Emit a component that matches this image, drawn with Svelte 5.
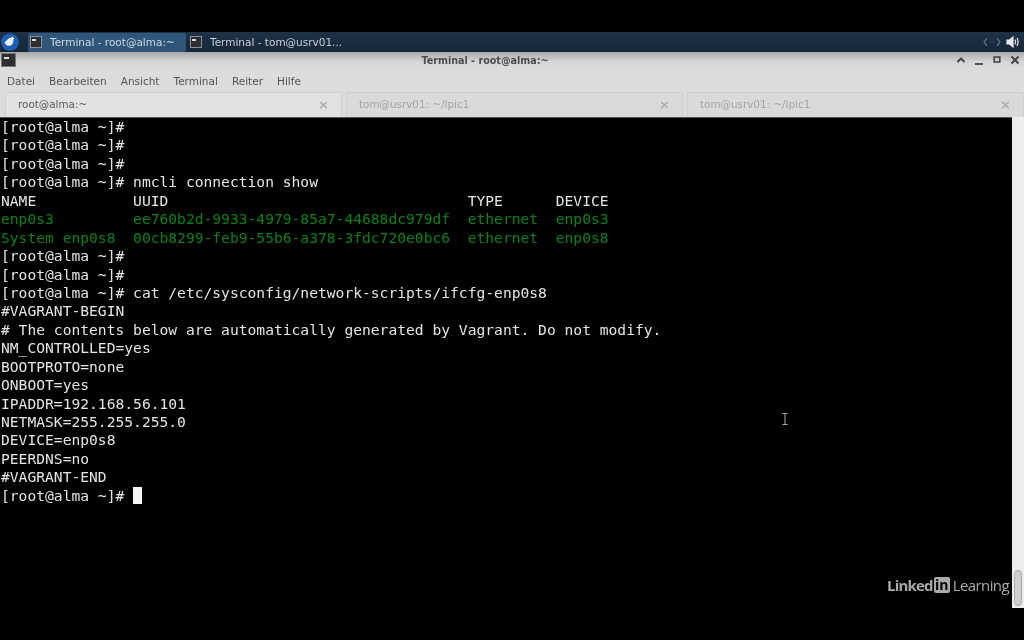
<script>
  const P = '[root@alma ~]#';
  const lines = [
    [P], [P], [P], [P + ' nmcli connection show'],
    ['NAME           UUID                                  TYPE      DEVICE'],
    ['enp0s3         ee760b2d-9933-4979-85a7-44688dc979df  ethernet  enp0s3', 'g'],
    ['System enp0s8  00cb8299-feb9-55b6-a378-3fdc720e0bc6  ethernet  enp0s8', 'g'],
    [P], [P], [P + ' cat /etc/sysconfig/network-scripts/ifcfg-enp0s8'],
    ['#VAGRANT-BEGIN'],
    ['# The contents below are automatically generated by Vagrant. Do not modify.'],
    ['NM_CONTROLLED=yes'], ['BOOTPROTO=none'], ['ONBOOT=yes'], ['IPADDR=192.168.56.101'],
    ['NETMASK=255.255.255.0'], ['DEVICE=enp0s8'], ['PEERDNS=no'], ['#VAGRANT-END']
  ];
  const menus = ['Datei', 'Bearbeiten', 'Ansicht', 'Terminal', 'Reiter', 'Hilfe'];
  const tabs = ['root@alma:~', 'tom@usrv01: ~/lpic1', 'tom@usrv01: ~/lpic1'];
</script>

<div class="screen">
  <div class="letterbox"></div>
  <div class="panel">
    <div class="logo">
      <svg width="18" height="18" viewBox="0 0 16 16">
        <circle cx="8" cy="8" r="7.8" fill="#1c5fb4" />
        <path d="M3.200 8.200c1-.5 1.600-1.500 2.600-2.500 1-1 2.400-1.500 3.500-1.700l.8-1.200.6 1.300 1.300.7-1 1c.1 2.200-.4 4.600-2.500 5.400-2.100.8-4.600-.5-5.300-3z" fill="#eef2f8" />
      </svg>
    </div>
    <div class="task active">
      <span class="ticon"><i></i></span><span>Terminal - root@alma:~</span>
    </div>
    <div class="task">
      <span class="ticon"><i></i></span><span>Terminal - tom@usrv01...</span>
    </div>
    <div class="tray">
      <svg width="18" height="12" viewBox="0 0 18 12" fill="none" stroke="#6c7a88" stroke-width="1.200">
        <path d="M4 2L1 6l3 4M14 2l3 4-3 4M7 6h1M10 6h1" />
      </svg>
      <svg width="14" height="14" viewBox="0 0 14 14" fill="none" stroke="#e6e8ea" stroke-width="1.200">
        <path d="M1 5h2.500L7 2v10L3.500 9H1z" fill="#e6e8ea" />
        <path d="M9 4.500c.8 1.500.8 3.500 0 5M11 3c1.300 2.500 1.300 5.500 0 8" />
      </svg>
    </div>
  </div>

  <div class="window">
    <div class="titlebar">
      <span class="wicon"><i></i></span>
      <span class="title">Terminal - root@alma:~</span>
      <div class="controls">
        <svg width="10" height="10" viewBox="0 0 10 10"><path d="M1.500 7l3.500-3.500L8.500 7" fill="none" stroke="#444" stroke-width="2" /></svg>
        <svg width="10" height="10" viewBox="0 0 10 10"><path d="M1 9h8" fill="none" stroke="#444" stroke-width="1.800" /></svg>
        <svg width="10" height="10" viewBox="0 0 10 10"><rect x="2.200" y="2" width="5.600" height="5" fill="none" stroke="#444" stroke-width="1.600" /></svg>
        <svg width="10" height="10" viewBox="0 0 10 10"><path d="M1.500 1.500l7 7M8.500 1.500l-7 7" fill="none" stroke="#444" stroke-width="2" /></svg>
      </div>
    </div>
    <div class="menubar">
      {#each menus as m}<span>{m}</span>{/each}
    </div>
    <div class="tabs">
      {#each tabs as t, i}
        <div class="tab" class:current={i === 0}>
          <span>{t}</span><span class="x">×</span>
        </div>
      {/each}
    </div>
    <div class="body">
      <div class="term">
        {#each lines as l}
          <div class="ln" class:green={l[1] === 'g'}>{l[0]}</div>
        {/each}
        <div class="ln">{P} <span class="cursor"></span></div>
        <div class="brand">
          <span class="linked">Linked</span><span class="in">in</span><span class="learn">Learning</span>
        </div>
        <div class="cursor-i">
          <svg width="6" height="12" viewBox="0 0 6 12"><path d="M0.500 .5h5M3 .5v11M.5 11.500h5" fill="none" stroke="#aaa" /></svg>
        </div>
      </div>
      <div class="scroll"><div class="thumb"></div></div>
    </div>
  </div>
  <div class="letterbox bottom"></div>
</div>

<style>
  :global(body) { margin: 0; background: #000; }
  .screen {
    width: 1024px; height: 640px; display: flex; flex-direction: column;
    overflow: hidden; background: #000; font-family: "DejaVu Sans", sans-serif;
    filter: blur(.4px);
  }
  .letterbox { height: 32px; flex: none; background: #000; }
  .letterbox.bottom { height: 32px; }
  .panel {
    height: 20px; flex: none; display: flex; align-items: center;
    background: linear-gradient(#1f3146, #16273a); color: #c4ced8; font-size: 10.500px;
  }
  .logo { width: 28px; display: flex; justify-content: center; align-items: center; flex: none; padding-right: 8px; box-sizing: border-box; }
  .task {
    height: 19px; width: 158px; display: flex; align-items: center; gap: 8px;
    padding-left: 2px; box-sizing: border-box; flex: none; white-space: nowrap;
  }
  .task.active { background: #2f5679; border-radius: 2px; margin-right: 2px; color: #cdd8e2; }
  .ticon { width: 12px; height: 12px; background: #2b2f33; border: 1px solid #8b9096; box-sizing: border-box; position: relative; flex: none; }
  .ticon i { position: absolute; left: 1px; top: 2px; width: 4px; height: 2px; background: #ddd; }
  .tray { margin-left: auto; display: flex; align-items: center; gap: 5px; padding-right: 4px; }
  .window { flex: 1; min-height: 0; display: flex; flex-direction: column; background: #dcdcdc; }
  .titlebar {
    height: 16px; flex: none; position: relative; display: flex; align-items: center; justify-content: center;
    background: linear-gradient(#a9a9a9, #d4d4d4 60%, #dcdcdc); padding-right: 54px; box-sizing: border-box;
  }
  .title { font-size: 9.600px; font-weight: 700; color: #4c4c4c; }
  .wicon { position: absolute; left: 1px; top: 1px; width: 15px; height: 14px; background: #2d2f30; border: 1px solid #777; box-sizing: border-box; }
  .wicon i { position: absolute; left: 2px; top: 3px; width: 5px; height: 2px; background: #ddd; }
  .controls { position: absolute; right: 4px; top: 3px; display: flex; gap: 8px; }
  .menubar {
    height: 24px; flex: none; display: flex; align-items: center; gap: 14px; padding: 2px 0 0 7px; box-sizing: border-box;
    font-size: 10.500px; color: #555;
  }
  .tabs { height: 25px; flex: none; display: flex; gap: 4px; padding-left: 5px; box-sizing: border-box; }
  .tab {
    width: 337px; height: 25px; box-sizing: border-box; display: flex; align-items: center; justify-content: space-between;
    padding: 0 12px 2px 12px; border: 1px solid #cfcfcf; border-bottom: none; border-radius: 2px 2px 0 0;
    font-size: 10.400px; color: #a6a6a6; background: #dadada;
  }
  .tab.current { color: #5a5a5a; background: #e2e2e2; border-color: #d0d0d0; }
  .x { font-size: 13px; color: #adadad; font-weight: 700; }
  .body { flex: 1; min-height: 0; display: flex; }
  .term {
    flex: 1; min-width: 0; position: relative; background: #000; color: #e4e4e4;
    font-family: "DejaVu Sans Mono", monospace; font-size: 14.630px; border-top: 1px solid #555; box-sizing: border-box;
    padding-left: 1px;
  }
  .ln { height: 18.450px; line-height: 18.450px; white-space: pre; }
  .green { color: #0d8019; }
  .cursor { display: inline-block; width: 9px; height: 17px; background: #f4f4f4; vertical-align: -3px; }
  .brand { position: absolute; right: 3px; top: 457px; display: flex; align-items: center; color: #a9a9a9; font-family: "Open Sans", sans-serif; font-size: 15px; white-space: nowrap; }
  .linked { font-weight: 700; letter-spacing: -.8px; }
  .in { background: #a9a9a9; color: #000; font-weight: 700; font-size: 14px; width: 16px; height: 16px; line-height: 15px; border-radius: 2px; text-align: center; margin: 0 3px 0 1px; }
  .learn { letter-spacing: -.6px; }
  .cursor-i { position: absolute; left: 782px; top: 295px; line-height: 0; }
  .scroll { width: 12px; flex: none; background: #ededed; display: flex; flex-direction: column; justify-content: flex-end; align-items: center; padding-bottom: 2px; box-sizing: border-box; }
  .thumb { width: 6px; height: 34px; background: #cfcfcf; border: 1px solid #aaa; border-radius: 4px; }
</style>
